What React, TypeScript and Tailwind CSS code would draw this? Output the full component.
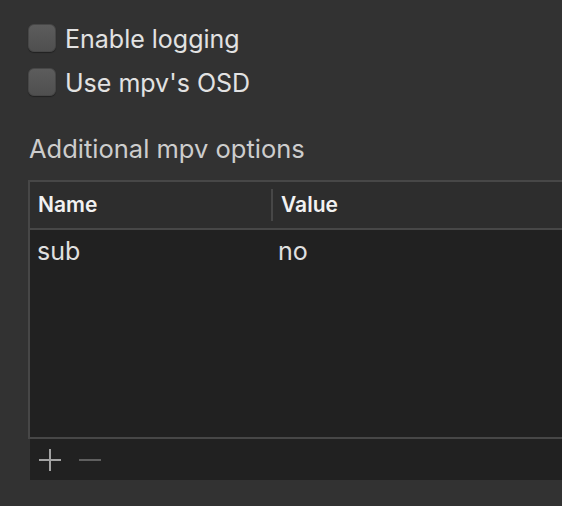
import React from "react";

function Checkbox({ label }: { label: string }) {
  return (
    <div className="flex items-center h-[28px]">
      <div className="w-[28px] h-[28px] rounded-[6px] bg-gradient-to-b from-[#5c5c5c] to-[#4f4f4f] border border-[#474747] shadow-[0_1px_1px_rgba(0,0,0,0.35)]" />
      <span className="ml-[9px] text-[25px] leading-none text-[#e2e2e2] pt-[2px]">{label}</span>
    </div>
  );
}

export default function App() {
  return (
    <div
      className="w-[562px] h-[506px] bg-[#323232] overflow-hidden pt-[24px] pl-[28px]"
      style={{ fontFamily: "Inter, 'Noto Sans', sans-serif" }}
    >
      <div className="flex flex-col gap-[16px]">
        <Checkbox label="Enable logging" />
        <Checkbox label="Use mpv's OSD" />
      </div>
      <div className="mt-[40px] h-[26px] flex items-center text-[25.5px] leading-none text-[#cdcdcd] pl-[1px]">
        Additional mpv options
      </div>
      <div className="mt-[18px] w-[600px]">
        <div className="border-t-2 border-l-2 border-b-2 border-[#474747] bg-[#212121] h-[259px] flex flex-col">
          <div className="h-[46px] bg-[#2d2d2d] border-b-2 border-[#474747] flex items-center box-content">
            <div className="w-[241px] h-full flex items-center pl-[8px] text-[21px] font-semibold text-[#f2f2f2]">
              Name
            </div>
            <div className="w-[2px] h-[32px] bg-[#474747]" />
            <div className="flex-1 h-full flex items-center pl-[8px] text-[21px] font-semibold text-[#f2f2f2]">
              Value
            </div>
          </div>
          <div className="h-[44px] flex items-center">
            <div className="w-[241px] pl-[7px] text-[25px] text-[#e0e0e0]">sub</div>
            <div className="w-[2px]" />
            <div className="flex-1 pl-[5px] text-[25px] text-[#e0e0e0]">no</div>
          </div>
        </div>
        <div className="ml-[2px] h-[41px] bg-[#212121] flex items-center pl-[9px] gap-[18px]">
          <svg width="22" height="22" viewBox="0 0 22 22">
            <rect x="10" y="0" width="2" height="22" fill="#a3a3a3" />
            <rect x="0" y="10" width="22" height="2" fill="#a3a3a3" />
          </svg>
          <svg width="22" height="22" viewBox="0 0 22 22">
            <rect x="0" y="10" width="22" height="2" fill="#5f5f5f" />
          </svg>
        </div>
      </div>
    </div>
  );
}
